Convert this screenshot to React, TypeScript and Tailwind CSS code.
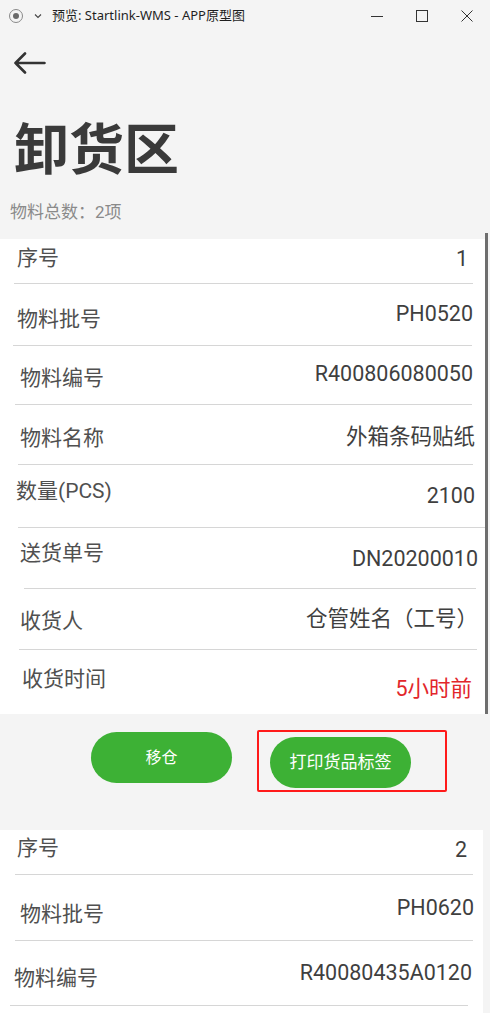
import React from "react";

// 卸货区 — 收货明细页（APP 原型预览窗口）

type Row = {
  label: string;
  value: string;
  h: number;
  lx: number;
  lt: number;
  vr: number;
  vt: number;
  dl?: number;
  dr?: number;
  red?: boolean;
};

const FIRST: Row[] = [
  { label: "序号", value: "1", h: 44, lx: 17, lt: 5, vr: 17, vt: 6, dl: 14, dr: 12 },
  { label: "物料批号", value: "PH0520", h: 61, lx: 17, lt: 21, vr: 12, vt: 16, dl: 13, dr: 13 },
  { label: "物料编号", value: "R400806080050", h: 58, lx: 20, lt: 18, vr: 12, vt: 14, dl: 15, dr: 13 },
  { label: "物料名称", value: "外箱条码贴纸", h: 59, lx: 20, lt: 19, vr: 10, vt: 18, dl: 18, dr: 12 },
  { label: "数量(PCS)", value: "2100", h: 62, lx: 16, lt: 12, vr: 10, vt: 17, dl: 18, dr: 0 },
  { label: "送货单号", value: "DN20200010", h: 60, lx: 20, lt: 11, vr: 7, vt: 17, dl: 24, dr: 9 },
  { label: "收货人", value: "仓管姓名（工号）", h: 60, lx: 20, lt: 18, vr: 7, vt: 16, dl: 19, dr: 8 },
  { label: "收货时间", value: "5小时前", h: 64, lx: 22, lt: 15, vr: 13, vt: 25, red: true },
];

const SECOND: Row[] = [
  { label: "序号", value: "2", h: 44, lx: 17, lt: 4, vr: 16, vt: 6, dl: 15, dr: 10 },
  { label: "物料批号", value: "PH0620", h: 65, lx: 20, lt: 25, vr: 9, vt: 19, dl: 15, dr: 10 },
  { label: "物料编号", value: "R40080435A0120", h: 64, lx: 14, lt: 23, vr: 11, vt: 18, dl: 10, dr: 15 },
];

function InfoRow({ row }: { row: Row }) {
  return (
    <>
      <div className="flex items-start justify-between" style={{ height: row.h }}>
        <span
          className="text-[21px] leading-[28px] text-[#505050]"
          style={{ marginLeft: row.lx, marginTop: row.lt }}
        >
          {row.label}
        </span>
        <span
          className={`text-[21.5px] leading-[28px] ${row.red ? "text-[#e2262b]" : "text-[#3f3f3f]"}`}
          style={{ marginRight: row.vr, marginTop: row.vt }}
        >
          {row.value}
        </span>
      </div>
      {row.dl !== undefined && (
        <div className="h-px bg-[#d6d6d6]" style={{ marginLeft: row.dl, marginRight: row.dr }} />
      )}
    </>
  );
}

function TitleBar() {
  return (
    <div className="flex h-[32px] items-center text-[13px] text-[#1f1f1f]">
      <svg width="16" height="16" viewBox="0 0 16 16" className="ml-[8px]">
        <circle cx="8" cy="8" r="6.5" fill="none" stroke="#8a8a8a" strokeWidth="1" />
        <circle cx="8" cy="8" r="3" fill="#6a6a6a" />
      </svg>
      <svg width="10" height="10" viewBox="0 0 10 10" className="ml-[9px]">
        <path d="M2 3.5 L5 6.5 L8 3.5" fill="none" stroke="#444" strokeWidth="1.1" />
      </svg>
      <span className="ml-[9px]" style={{ fontFamily: '"Noto Sans", "Noto Sans CJK SC", sans-serif' }}>
        预览: Startlink-WMS - APP原型图
      </span>
      <div className="ml-auto flex items-center">
        <svg width="14" height="14" viewBox="0 0 14 14" className="mr-[31px]">
          <path d="M1 7.5 H13" stroke="#333" strokeWidth="1" />
        </svg>
        <svg width="14" height="14" viewBox="0 0 14 14" className="mr-[31px]">
          <rect x="1.5" y="1.5" width="11" height="11" fill="none" stroke="#333" strokeWidth="1" />
        </svg>
        <svg width="14" height="14" viewBox="0 0 14 14" className="mr-[16px]">
          <path d="M1.5 1.5 L12.5 12.5 M12.5 1.5 L1.5 12.5" stroke="#333" strokeWidth="1" />
        </svg>
      </div>
    </div>
  );
}

export default function App() {
  return (
    <div
      className="h-[1013px] w-[490px] overflow-hidden bg-[#f4f4f4]"
      style={{ fontFamily: 'Roboto, "Noto Sans CJK SC", sans-serif' }}
    >
      <TitleBar />

      <div className="ml-[13px] mt-[20px]">
        <svg width="33" height="22" viewBox="0 0 33 22">
          <path
            d="M31.5 11 H2.5 M12 1.5 L2.5 11 L12 20.5"
            fill="none"
            stroke="#333"
            strokeWidth="2.6"
            strokeLinecap="round"
            strokeLinejoin="round"
          />
        </svg>
      </div>

      <h1 className="ml-[14px] mt-[49px] text-[55px] font-bold leading-[54px] text-[#3a3a3a]">卸货区</h1>
      <p className="ml-[10px] mt-[25px] text-[17px] leading-[20px] text-[#8a8a8a]">物料总数：2项</p>

      <div className="mt-[17px] flex">
        <div className="w-[485px] bg-white">
          {FIRST.map((r) => (
            <InfoRow key={r.label} row={r} />
          ))}
        </div>
        <div className="-mt-[6px] w-[3px] bg-[#6e6e6e]" />
      </div>

      <div className="flex h-[116px] items-start">
        <button className="ml-[91px] mt-[18px] h-[51px] w-[141px] rounded-full bg-[#3db135] text-[16px] text-white">
          移仓
        </button>
        <div className="ml-[25px] mt-[16px] h-[62px] w-[190px] rounded-[2px] border-2 border-[#ff1a1a] pl-[11px] pt-[5px]">
          <button className="h-[51px] w-[141px] rounded-full bg-[#3db135] text-[17px] text-white">
            打印货品标签
          </button>
        </div>
      </div>

      <div className="h-[200px] w-[483px] bg-white">
        {SECOND.map((r) => (
          <InfoRow key={r.label} row={r} />
        ))}
      </div>
    </div>
  );
}
